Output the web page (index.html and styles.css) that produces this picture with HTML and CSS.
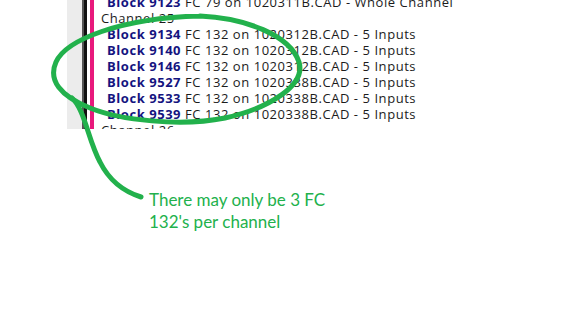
FILE: index.html
```html
<!DOCTYPE html>
<html>
<head>
  <title>FC 132 note</title>
  <link rel="stylesheet" href="styles.css">
</head>
<body>
  <div class="panel">
    <div class="strip"></div>
    <div class="rule"></div>
    <div class="pink"></div>
    <div class="list">
      <div class="item"><b>Block 9123</b> FC 79 on 1020311B.CAD - Whole Channel</div>
      <div class="channel">Channel 25</div>
      <div class="item"><b>Block 9134</b> FC 132 on 1020312B.CAD - 5 Inputs</div>
      <div class="item"><b>Block 9140</b> FC 132 on 1020312B.CAD - 5 Inputs</div>
      <div class="item"><b>Block 9146</b> FC 132 on 1020312B.CAD - 5 Inputs</div>
      <div class="item"><b>Block 9527</b> FC 132 on 1020338B.CAD - 5 Inputs</div>
      <div class="item"><b>Block 9533</b> FC 132 on 1020338B.CAD - 5 Inputs</div>
      <div class="item"><b>Block 9539</b> FC 132 on 1020338B.CAD - 5 Inputs</div>
      <div class="channel">Channel 26</div>
    </div>
  </div>

  <p class="note">There may only be 3 FC<br>132's per channel</p>

  <svg class="marker" width="571" height="315" viewBox="0 0 571 315">
    <path d="M 200 16 C 245 18, 290 35, 299 62 C 306 85, 270 108, 225 118 C 180 127, 120 120, 90 108 C 60 96, 48 80, 56 62 C 66 40, 120 18, 200 16"
          fill="none" stroke="#22b14c" stroke-width="5" stroke-linecap="round"/>
    <path d="M 72 98 C 85 110, 88 140, 100 162 C 110 182, 125 192, 141 197"
          fill="none" stroke="#22b14c" stroke-width="5" stroke-linecap="round"/>
  </svg>
</body>
</html>
```

FILE: styles.css
```css
* {
  margin: 0;
  padding: 0;
  box-sizing: border-box;
}

body {
  background-color: #ffffff;
  font-family: "Open Sans", "Noto Sans", sans-serif;
  position: relative;
  width: 571px;
  height: 315px;
  overflow: hidden;
}

.panel {
  display: flex;
  height: 129px;
  overflow: hidden;
  padding-left: 67px;
}

.strip {
  width: 15px;
  background-color: #ececec;
}

.rule {
  width: 5px;
  border-left: 2px solid #555555;
  border-right: 3px solid #111111;
}

.pink {
  width: 4px;
  margin-left: 3px;
  background-color: #e8197c;
}

.list {
  margin-top: -6px;
  padding-left: 7px;
  font-size: 13px;
  line-height: 16px;
  letter-spacing: 0.55px;
  color: #1c1c1c;
  white-space: nowrap;
}

.item {
  padding-left: 6px;
}

.item b {
  color: #14147f;
}

.note {
  margin-top: 60px;
  margin-left: 149px;
  font-family: Lato, "Open Sans", sans-serif;
  font-size: 17px;
  line-height: 22px;
  color: #22b14c;
}

.marker {
  position: absolute;
  top: 0;
  left: 0;
  pointer-events: none;
}
```
